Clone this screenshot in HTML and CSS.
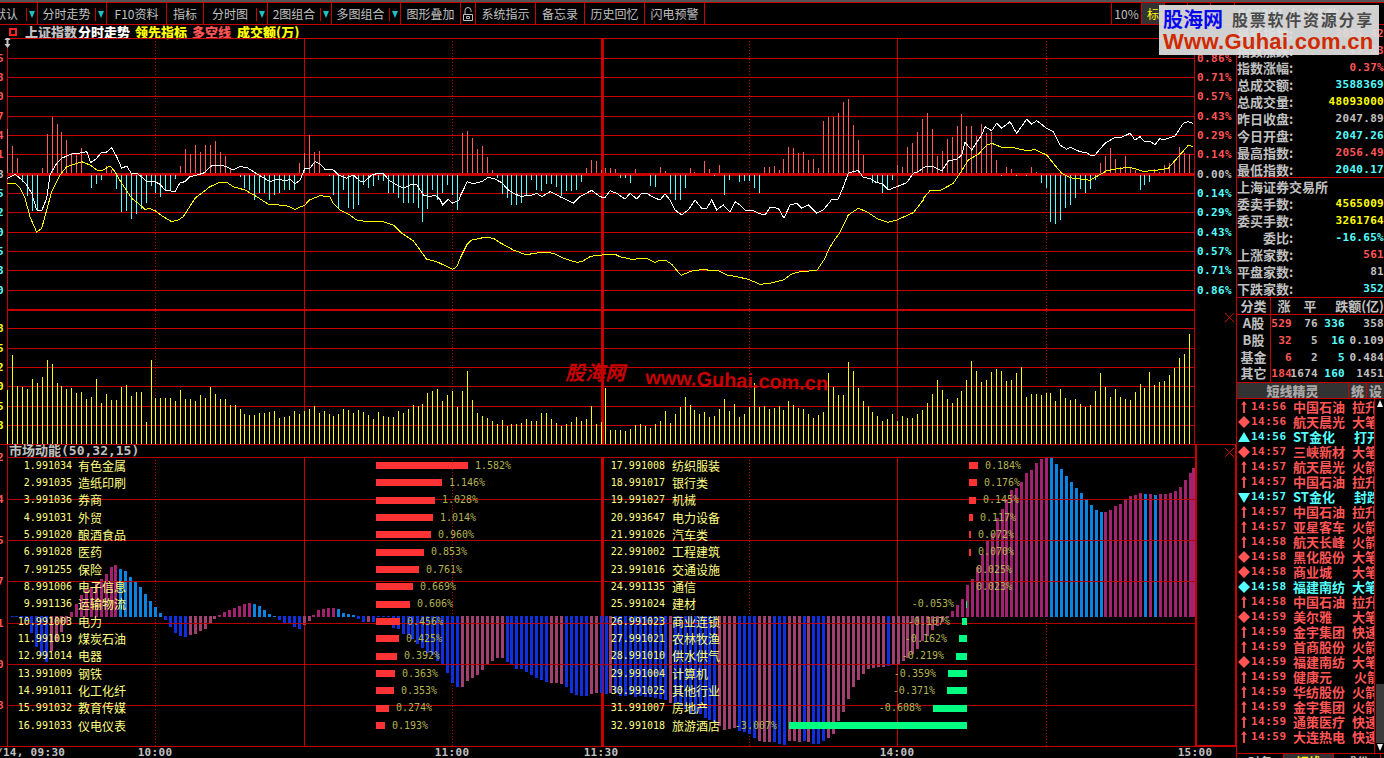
FILE: index.html
```html
<!DOCTYPE html>
<html lang="zh">
<head>
<meta charset="utf-8">
<title>上证指数 分时走势</title>
<link rel="stylesheet" href="styles.css">
</head>
<body>
<svg class="defs" aria-hidden="true">
  <symbol id="i-up" viewBox="0 0 12 13"><path d="M6 0L9 4H7V13H5V4H3z"/></symbol>
  <symbol id="i-dia" viewBox="0 0 12 12"><path d="M6 0L12 6L6 12L0 6z"/></symbol>
  <symbol id="i-tu" viewBox="0 0 12 12"><path d="M6 1L12 11H0z"/></symbol>
  <symbol id="i-td" viewBox="0 0 12 12"><path d="M0 2H12L6 12z"/></symbol>
</svg>

<header class="toolbar">
  <div class="tool w38"><span class="clip-l">默认</span><i class="drop"></i></div>
  <div class="tool w69"><span class="lbl">分时走势</span><i class="drop"></i></div>
  <div class="tool w60"><span class="lbl">F10资料</span></div>
  <div class="tool w37"><span class="lbl">指标</span></div>
  <div class="tool w64"><span class="lbl">分时图</span><i class="drop"></i></div>
  <div class="tool w64"><span class="lbl">2图组合</span><i class="drop"></i></div>
  <div class="tool w69"><span class="lbl">多图组合</span><i class="drop"></i></div>
  <div class="tool w60"><span class="lbl">图形叠加</span></div>
  <div class="tool w15">
    <svg class="lock" viewBox="0 0 12 15"><path d="M3 7V3.5a3 3 0 0 1 6 0V5M1.5 7.5h9v6h-9zM4.5 9.5h3v2h-3z"/></svg>
  </div>
  <div class="tool w60"><span class="lbl">系统指示</span></div>
  <div class="tool w49"><span class="lbl">备忘录</span></div>
  <div class="tool w60"><span class="lbl">历史回忆</span></div>
  <div class="tool w60"><span class="lbl">闪电预警</span></div>
  <div class="tool-gap"></div>
  <div class="tool w31 first"><span class="lbl">10%</span></div>
  <div class="tool w23 on"><span class="lbl">标</span></div>
  <div class="tool w23"></div>
  <div class="tool w23"></div>
  <div class="tool w24"></div>
  <div class="code"><span class="code-n">000001</span> 上证指数</div>
</header>

<div class="main">
  <section class="chart">
    <div class="title">
      <i class="mark"></i>
      <b class="t-gray">上证指数</b><b class="t-white">分时走势</b><b class="t-yellow g8">领先指标</b><b class="t-red g6">多空线</b><b class="t-yellow g7">成交额(万)</b>
    </div>
    <div class="plot">
      <svg class="canvas" viewBox="0 38 1236 720" width="1236" height="720">
        <path class="grid" d="M7 38.5H1236M7 58.5H1194M7 77.5H1194M7 96.5H1194M7 116.5H1194M7 135.5H1194M7 154.5H1194M7 193.5H1194M7 212.5H1194M7 232.5H1194M7 251.5H1194M7 270.5H1194M7 290.5H1194M7 328.5H1194M7 348.5H1194M7 367.5H1194M7 386.5H1194M7 406.5H1194M7 425.5H1194"/>
        <path class="grid" d="M7.5 38V746M304.5 38V444M304.5 457V746M897.5 38V444M897.5 457V746"/>
        <path class="grid dots" d="M155.5 38V444M155.5 457V746M452.5 38V444M452.5 457V746M749.5 38V444M749.5 457V746M1046.5 38V444M1046.5 457V746"/>
        <path class="grid w3" d="M602 38V444M602 457V746M7 174H1194"/>
        <path class="grid w2" d="M7 310H1194"/>
        <g id="bars-up"></g>
        <g id="bars-vol"></g>
        <path id="line-white" class="ln white"/>
        <path id="line-yellow" class="ln yellow"/>
        <g id="bars-hist"></g>
        <path class="grid lower" d="M7 457.5H1195M7 499.5H1195M7 540.5H1195M7 581.5H1195M7 623.5H1195M7 664.5H1195M7 705.5H1195"/>
        <path class="grid" d="M0 444.5H1236M0 746.5H1236M1194.5 38V444"/>
        <path class="grid w2" d="M1195.5 444V746M1235.5 444V746M1195 745.5H1236"/>
        <path class="cross" d="M1225 313l9 9m0-9l-9 9M1225 448l9 9m0-9l-9 9"/>

        <text class="wm-cn" x="565" y="380">股海网</text>
        <text class="wm-en" x="645" y="384" textLength="183" transform="rotate(2 645 384)">www.Guhai.com.cn</text>

        <path class="updown" d="M7.5 36l3 4h-2v4h2l-3 4-3-4h2v-4h-2z"/>

        <g class="ax">
          <text class="c-red" x="1197" y="62">0.86%</text>
          <text class="c-red" x="1197" y="81">0.71%</text>
          <text class="c-red" x="1197" y="100">0.57%</text>
          <text class="c-red" x="1197" y="120">0.43%</text>
          <text class="c-red" x="1197" y="139">0.29%</text>
          <text class="c-red" x="1197" y="158">0.14%</text>
          <text class="c-gray" x="1197" y="178">0.00%</text>
          <text class="c-cyan" x="1197" y="197">0.14%</text>
          <text class="c-cyan" x="1197" y="216">0.29%</text>
          <text class="c-cyan" x="1197" y="236">0.43%</text>
          <text class="c-cyan" x="1197" y="255">0.57%</text>
          <text class="c-cyan" x="1197" y="274">0.71%</text>
          <text class="c-cyan" x="1197" y="294">0.86%</text>
        </g>
        <g class="ax end">
          <text class="c-red" x="4" y="62">2065</text>
          <text class="c-red" x="4" y="81">2063</text>
          <text class="c-red" x="4" y="100">2060</text>
          <text class="c-red" x="4" y="120">2057</text>
          <text class="c-red" x="4" y="139">2054</text>
          <text class="c-red" x="4" y="158">2051</text>
          <text class="c-gray" x="4" y="178">2048</text>
          <text class="c-cyan" x="4" y="197">2045</text>
          <text class="c-cyan" x="4" y="216">2042</text>
          <text class="c-cyan" x="4" y="236">2040</text>
          <text class="c-cyan" x="4" y="255">2035</text>
          <text class="c-cyan" x="4" y="274">2033</text>
          <text class="c-cyan" x="4" y="294">2030</text>
          <text class="c-yel" x="4" y="332">3048</text>
          <text class="c-yel" x="4" y="352">2505</text>
          <text class="c-yel" x="4" y="371">2032</text>
          <text class="c-yel" x="4" y="390">1520</text>
          <text class="c-yel" x="4" y="410">1015</text>
          <text class="c-yel" x="4" y="429">503</text>
          <text class="c-red" x="4" y="461">12</text>
          <text class="c-red" x="4" y="503">24</text>
          <text class="c-red" x="4" y="544">35</text>
          <text class="c-red" x="4" y="585">27</text>
          <text class="c-red" x="4" y="627">31</text>
          <text class="c-red" x="4" y="668">50</text>
          <text class="c-red" x="4" y="709">68</text>
        </g>
        <text class="sub" x="9" y="455">市场动能(50,32,15)</text>
        <g class="time">
          <text x="-4" y="756">/14, 09:30</text>
          <text class="mid" x="155" y="756">10:00</text>
          <text class="mid" x="452" y="756">11:00</text>
          <text class="mid" x="601" y="756">11:30</text>
          <text class="mid" x="897" y="756">14:00</text>
          <text class="mid" x="1195" y="756">15:00</text>
        </g>
      </svg>

      <div class="movers">
        <div class="col1">
          <div class="mv"><span class="num">1.991034</span><span class="nm">有色金属</span><i class="bar up" style="width:92px"></i><span class="val">1.582%</span></div>
          <div class="mv"><span class="num">2.991035</span><span class="nm">造纸印刷</span><i class="bar up" style="width:66px"></i><span class="val">1.146%</span></div>
          <div class="mv"><span class="num">3.991036</span><span class="nm">券商</span><i class="bar up" style="width:59px"></i><span class="val">1.028%</span></div>
          <div class="mv"><span class="num">4.991031</span><span class="nm">外贸</span><i class="bar up" style="width:57px"></i><span class="val">1.014%</span></div>
          <div class="mv"><span class="num">5.991020</span><span class="nm">酿酒食品</span><i class="bar up" style="width:55px"></i><span class="val">0.960%</span></div>
          <div class="mv"><span class="num">6.991028</span><span class="nm">医药</span><i class="bar up" style="width:48px"></i><span class="val">0.853%</span></div>
          <div class="mv"><span class="num">7.991255</span><span class="nm">保险</span><i class="bar up" style="width:43px"></i><span class="val">0.761%</span></div>
          <div class="mv"><span class="num">8.991006</span><span class="nm">电子信息</span><i class="bar up" style="width:37px"></i><span class="val">0.669%</span></div>
          <div class="mv"><span class="num">9.991136</span><span class="nm">运输物流</span><i class="bar up" style="width:34px"></i><span class="val">0.606%</span></div>
          <div class="mv"><span class="num">10.991003</span><span class="nm">电力</span><i class="bar up" style="width:24px"></i><span class="val">0.456%</span></div>
          <div class="mv"><span class="num">11.991019</span><span class="nm">煤炭石油</span><i class="bar up" style="width:23px"></i><span class="val">0.425%</span></div>
          <div class="mv"><span class="num">12.991014</span><span class="nm">电器</span><i class="bar up" style="width:21px"></i><span class="val">0.392%</span></div>
          <div class="mv"><span class="num">13.991009</span><span class="nm">钢铁</span><i class="bar up" style="width:19px"></i><span class="val">0.363%</span></div>
          <div class="mv"><span class="num">14.991011</span><span class="nm">化工化纤</span><i class="bar up" style="width:18px"></i><span class="val">0.353%</span></div>
          <div class="mv"><span class="num">15.991032</span><span class="nm">教育传媒</span><i class="bar up" style="width:13px"></i><span class="val">0.274%</span></div>
          <div class="mv"><span class="num">16.991033</span><span class="nm">仪电仪表</span><i class="bar up" style="width:9px"></i><span class="val">0.193%</span></div>
        </div>
        <div class="col2">
          <div class="mv"><span class="num">17.991008</span><div class="cell"><span>纺织服装</span></div><i class="bar up" style="width:9px"></i><span class="val">0.184%</span></div>
          <div class="mv"><span class="num">18.991017</span><div class="cell"><span>银行类</span></div><i class="bar up" style="width:8px"></i><span class="val">0.176%</span></div>
          <div class="mv"><span class="num">19.991027</span><div class="cell"><span>机械</span></div><i class="bar up" style="width:7px"></i><span class="val">0.145%</span></div>
          <div class="mv"><span class="num">20.993647</span><div class="cell"><span>电力设备</span></div><i class="bar up" style="width:4px"></i><span class="val">0.117%</span></div>
          <div class="mv"><span class="num">21.991026</span><div class="cell"><span>汽车类</span></div><i class="bar up" style="width:2px"></i><span class="val">0.072%</span></div>
          <div class="mv"><span class="num">22.991002</span><div class="cell"><span>工程建筑</span></div><i class="bar up" style="width:2px"></i><span class="val">0.070%</span></div>
          <div class="mv"><span class="num">23.991016</span><div class="cell"><span>交通设施</span></div><i class="bar up" style="width:0"></i><span class="val">0.025%</span></div>
          <div class="mv"><span class="num">24.991135</span><div class="cell"><span>通信</span></div><i class="bar up" style="width:0"></i><span class="val">0.023%</span></div>
          <div class="mv"><span class="num">25.991024</span><div class="cell"><span>建材</span><span class="neg"><span class="val">-0.053%</span><i class="bar dn" style="width:1px"></i></span></div></div>
          <div class="mv"><span class="num">26.991023</span><div class="cell"><span>商业连锁</span><span class="neg"><span class="val">-0.107%</span><i class="bar dn" style="width:5px"></i></span></div></div>
          <div class="mv"><span class="num">27.991021</span><div class="cell"><span>农林牧渔</span><span class="neg"><span class="val">-0.162%</span><i class="bar dn" style="width:8px"></i></span></div></div>
          <div class="mv"><span class="num">28.991010</span><div class="cell"><span>供水供气</span><span class="neg"><span class="val">-0.219%</span><i class="bar dn" style="width:11px"></i></span></div></div>
          <div class="mv"><span class="num">29.991004</span><div class="cell"><span>计算机</span><span class="neg"><span class="val">-0.359%</span><i class="bar dn" style="width:19px"></i></span></div></div>
          <div class="mv"><span class="num">30.991025</span><div class="cell"><span>其他行业</span><span class="neg"><span class="val">-0.371%</span><i class="bar dn" style="width:20px"></i></span></div></div>
          <div class="mv"><span class="num">31.991007</span><div class="cell"><span>房地产</span><span class="neg"><span class="val">-0.608%</span><i class="bar dn" style="width:34px"></i></span></div></div>
          <div class="mv"><span class="num">32.991018</span><div class="cell"><span>旅游酒店</span><span class="neg"><span class="val">-3.007%</span><i class="bar dn" style="width:178px"></i></span></div></div>
        </div>
      </div>
    </div>
  </section>

  <aside class="side">
    <div class="block b1">
      <div class="kv"><span>最新指数:</span><b class="c-red">2055.42</b></div>
      <div class="kv"><span>指数涨跌:</span><b class="c-red">+7.53</b></div>
      <div class="kv"><span>指数涨幅:</span><b class="c-red">0.37%</b></div>
      <div class="kv"><span>总成交额:</span><b class="c-cyan">3588369</b></div>
      <div class="kv"><span>总成交量:</span><b class="c-yel">48093000</b></div>
      <div class="kv"><span>昨日收盘:</span><b class="c-gray">2047.89</b></div>
      <div class="kv"><span>今日开盘:</span><b class="c-cyan">2047.26</b></div>
      <div class="kv"><span>最高指数:</span><b class="c-red">2056.49</b></div>
      <div class="kv"><span>最低指数:</span><b class="c-cyan">2040.17</b></div>
    </div>
    <div class="block b2">
      <div class="kv"><span>上海证券交易所</span></div>
      <div class="kv"><span>委卖手数:</span><b class="c-yel">4565009</b></div>
      <div class="kv"><span>委买手数:</span><b class="c-yel">3261764</b></div>
      <div class="kv"><span class="pad-l">委比:</span><b class="c-cyan">-16.65%</b></div>
      <div class="kv"><span>上涨家数:</span><b class="c-red">561</b></div>
      <div class="kv"><span>平盘家数:</span><b class="c-gray">81</b></div>
      <div class="kv"><span>下跌家数:</span><b class="c-cyan">352</b></div>
    </div>
    <div class="stats">
      <div class="st st-h"><span class="st-a">分类</span><span class="st-c">涨</span><span class="st-c">平</span><span class="st-z">跌额(亿)</span></div>
      <div class="st"><span class="st-a">A股</span><b class="c-red">529</b><b class="c-gray">76</b><b class="c-cyan">336</b><b class="c-gray">358</b></div>
      <div class="st"><span class="st-a">B股</span><b class="c-red">32</b><b class="c-gray">5</b><b class="c-cyan">16</b><b class="c-gray">0.109</b></div>
      <div class="st"><span class="st-a">基金</span><b class="c-red">6</b><b class="c-gray">2</b><b class="c-cyan">5</b><b class="c-gray">0.484</b></div>
      <div class="st"><span class="st-a">其它</span><b class="c-red">184</b><b class="c-gray">1674</b><b class="c-cyan">160</b><b class="c-gray">1451</b></div>
    </div>
    <div class="elf">
      <b class="elf-t">短线精灵</b><b class="elf-b">统</b><b class="elf-b">设</b>
    </div>
    <div class="feed">
      <ul class="events">
        <li class="ev"><svg class="ic"><use href="#i-up"/></svg><b>14:56</b><span>中国石油</span><span>拉升</span></li>
        <li class="ev"><svg class="ic"><use href="#i-dia"/></svg><b>14:56</b><span>航天晨光</span><span>大笔</span></li>
        <li class="ev cy"><svg class="ic"><use href="#i-tu"/></svg><b>14:56</b><span>ST金化</span><span class="in">打开</span></li>
        <li class="ev"><svg class="ic"><use href="#i-dia"/></svg><b>14:57</b><span>三峡新材</span><span>大笔</span></li>
        <li class="ev"><svg class="ic"><use href="#i-up"/></svg><b>14:57</b><span>航天晨光</span><span>火箭</span></li>
        <li class="ev"><svg class="ic"><use href="#i-up"/></svg><b>14:57</b><span>中国石油</span><span>拉升</span></li>
        <li class="ev cy"><svg class="ic"><use href="#i-td"/></svg><b>14:57</b><span>ST金化</span><span class="in">封跌</span></li>
        <li class="ev"><svg class="ic"><use href="#i-up"/></svg><b>14:57</b><span>中国石油</span><span>拉升</span></li>
        <li class="ev"><svg class="ic"><use href="#i-up"/></svg><b>14:57</b><span>亚星客车</span><span>火箭</span></li>
        <li class="ev"><svg class="ic"><use href="#i-up"/></svg><b>14:58</b><span>航天长峰</span><span>火箭</span></li>
        <li class="ev"><svg class="ic"><use href="#i-dia"/></svg><b>14:58</b><span>黑化股份</span><span>大笔</span></li>
        <li class="ev"><svg class="ic"><use href="#i-dia"/></svg><b>14:58</b><span>商业城</span><span>大笔</span></li>
        <li class="ev cy"><svg class="ic"><use href="#i-dia"/></svg><b>14:58</b><span>福建南纺</span><span>大笔</span></li>
        <li class="ev"><svg class="ic"><use href="#i-up"/></svg><b>14:58</b><span>中国石油</span><span>拉升</span></li>
        <li class="ev"><svg class="ic"><use href="#i-dia"/></svg><b>14:59</b><span>美尔雅</span><span>大笔</span></li>
        <li class="ev"><svg class="ic"><use href="#i-up"/></svg><b>14:59</b><span>金宇集团</span><span>快速</span></li>
        <li class="ev"><svg class="ic"><use href="#i-up"/></svg><b>14:59</b><span>首商股份</span><span>火箭</span></li>
        <li class="ev"><svg class="ic"><use href="#i-dia"/></svg><b>14:59</b><span>福建南纺</span><span>大笔</span></li>
        <li class="ev"><svg class="ic"><use href="#i-up"/></svg><b>14:59</b><span>健康元</span><span class="in">火箭</span></li>
        <li class="ev"><svg class="ic"><use href="#i-up"/></svg><b>14:59</b><span>华纺股份</span><span>火箭</span></li>
        <li class="ev"><svg class="ic"><use href="#i-up"/></svg><b>14:59</b><span>金宇集团</span><span>火箭</span></li>
        <li class="ev"><svg class="ic"><use href="#i-up"/></svg><b>14:59</b><span>通策医疗</span><span>快速</span></li>
        <li class="ev"><svg class="ic"><use href="#i-up"/></svg><b>14:59</b><span>大连热电</span><span>快速</span></li>
      </ul>
      <div class="scroll">
        <i class="sb-btn sb-up"></i>
        <i class="sb-thumb"></i>
        <i class="sb-btn sb-dn"></i>
      </div>
    </div>
    <div class="tabs"><span class="tab">财务</span><span class="tab active">短线</span><span class="tab">成份</span></div>
  </aside>
</div>

<div class="brand">
  <div class="brand-a"><b class="brand-cn">股海网</b><span class="brand-sl">股票软件资源分享</span></div>
  <b class="brand-url">Www.Guhai.com.cn</b>
</div>

<script src="chart.js"></script>
</body>
</html>
```
FILE: styles.css
```css
* { box-sizing: border-box; }
html, body { margin: 0; padding: 0; background: #000; }
body {
  width: 1384px; height: 758px; overflow: hidden; position: relative;
  color: #c0c0c0;
  font: 12px/1 "DejaVu Sans Mono", "Noto Sans CJK SC", monospace;
}
.defs { position: absolute; width: 0; height: 0; }
ul { list-style: none; margin: 0; padding: 0; }

/* toolbar */
.toolbar {
  display: flex; height: 25px;
  border-top: 2px solid #555;
  position: relative;
  background: #000;
}
.toolbar::before { content: ""; position: absolute; left: 0; right: 0; top: 0; border-top: 1px solid #c80000; }
.toolbar::after { content: ""; position: absolute; left: 0; right: 0; bottom: 0; border-top: 1px solid #c80000; }
.tool {
  flex: none; height: 22px; margin-top: 1px;
  display: flex; align-items: center;
  border-right: 1px solid #c80000;
  font-size: 12px; color: #c0c0c0;
  overflow: hidden;
}
.lbl { flex: 1; text-align: center; white-space: nowrap; font-family: "Noto Sans CJK SC", sans-serif; font-size: 12px; }
.clip-l { flex: 1; margin-left: -6px; white-space: nowrap; font-family: "Noto Sans CJK SC", sans-serif; }
.w15 { width: 15px; justify-content: center; }
.w23 { width: 23px; } .w24 { width: 24px; } .w31 { width: 31px; }
.w37 { width: 37px; } .w38 { width: 38px; } .w49 { width: 49px; }
.w60 { width: 60px; } .w64 { width: 64px; } .w69 { width: 69px; }
.first { border-left: 1px solid #c80000; }
.tool-gap { flex: 1; }
.on { background: #333; }
.on .lbl { color: #ffff00; }
.drop {
  flex: none; width: 11px; height: 13px; position: relative;
  border-left: 1px solid #c80000;
  margin-right: 0;
}
.drop::after {
  content: ""; position: absolute; left: 2px; top: 3px;
  border: 3.5px solid transparent; border-top: 7px solid #1fc0c0; border-bottom: 0;
}
.lock { width: 12px; height: 15px; fill: none; stroke: #c0c0c0; stroke-width: 1; }
.code { width: 149px; padding-left: 3px; margin-top: 5px; font-weight: bold; color: #c0c0c0; white-space: nowrap; font-family: "Noto Sans CJK SC", sans-serif; font-size: 13px; }
.code-n { color: #55ffff; }

/* main */
.main { display: flex; height: 733px; }
.chart { width: 1236px; flex: none; display: flex; flex-direction: column; }
.title {
  height: 13px; display: flex; align-items: center;
  font: bold 13px/13px "Noto Sans CJK SC", sans-serif;
  padding-left: 9px;
  white-space: nowrap;
}
.mark { width: 8px; height: 8px; border: 2px solid #ff2020; margin-right: 8px; flex: none; }
.t-gray { color: #c0c0c0; } .t-white { color: #fff; margin-left: 1px; }
.t-yellow { color: #ffff00; } .t-red { color: #ff5555; }
.g8 { margin-left: 5px; } .g6 { margin-left: 5px; } .g7 { margin-left: 6px; }

.plot { position: relative; flex: 1; overflow: hidden; }
.canvas { display: block; }
.grid { fill: none; stroke: #c80000; stroke-width: 1; shape-rendering: crispEdges; }
.dots { stroke-dasharray: 1 2; }
.w3 { stroke-width: 3; }
.w2 { stroke-width: 2; }
.lower { stroke: #b40000; }
.cross { fill: none; stroke: #c80000; stroke-width: 1; }
.ln { fill: none; stroke-width: 1; shape-rendering: crispEdges; }
.white { stroke: #fff; }
.yellow { stroke: #ffff00; }
.b-red { stroke: #ff5c5c; stroke-width: 1; shape-rendering: crispEdges; fill: none; }
.b-cy { stroke: #55ffff; stroke-width: 1; shape-rendering: crispEdges; fill: none; }
.b-vol { stroke: #ffff00; stroke-width: 1; shape-rendering: crispEdges; fill: none; }
.h-mag { fill: #a32270; shape-rendering: crispEdges; }
.h-sky { fill: #0a84e0; shape-rendering: crispEdges; }
.h-pink { fill: #a04070; shape-rendering: crispEdges; }
.h-blue { fill: #1030e0; shape-rendering: crispEdges; }
.updown { fill: #c8c8c8; }

.ax text { font: bold 11px "DejaVu Sans Mono", monospace; letter-spacing: .4px; }
.ax.end text { text-anchor: end; }
text.c-red { fill: #ff5555; } text.c-cyan { fill: #55ffff; }
text.c-gray { fill: #c0c0c0; } text.c-yel { fill: #ffff00; }
.sub { font: bold 13px "DejaVu Sans Mono", "Noto Sans CJK SC", monospace; fill: #c0c0c0; }
.time text { font: bold 11px "DejaVu Sans Mono", monospace; letter-spacing: .3px; fill: #c0c0c0; }
.time .mid { text-anchor: middle; }
.wm-cn { font: bold 20px "Noto Sans CJK SC", sans-serif; fill: #c80000; font-style: italic; }
.wm-en { font: bold 20px "Liberation Sans", sans-serif; fill: #c80000; }

/* movers */
.movers {
  position: absolute; left: 0; top: 419px; width: 1195px; height: 278px;
  display: flex;
  font-size: 10px; color: #ffff80;
}
.col1 { width: 606px; flex: none; }
.col2 { flex: 1; }
.mv { display: flex; align-items: center; height: 17.33px; white-space: nowrap; }
.num { flex: none; text-align: right; }
.col1 .num { width: 72px; }
.col2 .num { width: 59px; }
.nm { flex: none; width: 298px; margin-left: 6px; font: 12px/1 "Noto Sans CJK SC", sans-serif; }
.cell {
  flex: none; width: 295px; margin-left: 7px; margin-right: 2px;
  display: flex; align-items: center; justify-content: space-between;
  font: 12px/1 "Noto Sans CJK SC", sans-serif;
}
.neg { display: flex; align-items: center; gap: 12px; font: 10px/1 "DejaVu Sans Mono", monospace; }
.bar { flex: none; height: 7px; display: block; }
.up { background: #ff3333; margin-right: 7px; }
.dn { background: #00ff80; }
.val { color: #b4b450; }

/* sidebar */
.side {
  width: 148px; flex: none; overflow: hidden;
  border-left: 1px solid #c80000;
  display: flex; flex-direction: column;
  margin-top: 0;
}
.block { border-bottom: 1px solid #c80000; flex: none; }
.b1 { height: 153px; }
.b2 { height: 120px; }
.kv {
  height: 17px; display: flex; justify-content: space-between; align-items: center;
  white-space: nowrap; overflow: hidden;
  font: bold 13px/17px "Noto Sans CJK SC", sans-serif; color: #c0c0c0;
}
.kv span { padding-left: 0; }
.kv b, .st b { font: bold 11px/17px "DejaVu Sans Mono", monospace; letter-spacing: .3px; }
.pad-l { margin-left: 26px; }
b.c-red { color: #ff5555; } b.c-cyan { color: #55ffff; } b.c-gray { color: #c0c0c0; } b.c-yel { color: #ffff00; }

.stats { display: flex; flex-direction: column; font: bold 13px/16px "Noto Sans CJK SC", sans-serif; flex: none; }
.st {
  display: grid; grid-template-columns: 34px 21px 26px 27px 39px;
  height: 16.75px; align-items: center; justify-items: end;
  white-space: nowrap;
}
.st-h { height: 17px; border-bottom: 1px solid #c80000; flex: none; grid-template-columns: 34px 26px 26px 1fr; justify-items: center; }
.st-a { justify-self: stretch; text-align: center; border-right: 1px solid #c80000; height: 100%; line-height: 16px; }
.st-c { justify-self: center; }
.st-z { justify-self: end; font-size: 13px; }

.elf {
  height: 17px; display: flex; background: #333;
  border-top: 1px solid #c80000; border-bottom: 1px solid #c80000;
  font: bold 13px/15px "Noto Sans CJK SC", sans-serif; color: #a8a8a8;
  flex: none; text-align: center;
}
.elf-t { flex: 1; }
.elf-b { width: 18px; border-left: 1px solid #c80000; }

.feed { display: flex; height: 354px; flex: none; }
.events { width: 137px; flex: none; overflow: hidden; color: #ff5555; }
.ev {
  display: grid; grid-template-columns: 14px 42px 59px 22px;
  height: 15px; align-items: center; white-space: nowrap;
  font: bold 13px/15px "Noto Sans CJK SC", sans-serif;
  overflow: hidden;
}
.ev b { font: bold 11px/15px "DejaVu Sans Mono", monospace; letter-spacing: .5px; }
.ev span:last-child { overflow: hidden; }
.ev .in { padding-left: 2px; }
.cy { color: #55ffff; }
.ic { width: 12px; height: 12px; margin-left: 1px; fill: currentColor; }

.scroll { width: 10px; flex: none; position: relative; border-left: 1px solid #c80000; }
.sb-btn { display: block; position: absolute; left: 1px; width: 9px; height: 9px; }
.sb-btn::after {
  content: ""; position: absolute; left: 1px; border: 3.5px solid transparent;
}
.sb-up { top: 1px; }
.sb-up::after { top: 0; border-bottom: 7px solid #eee; border-top: 0; }
.sb-dn { top: 345px; }
.sb-dn::after { top: 0; border-top: 7px solid #eee; border-bottom: 0; }
.sb-thumb { display: block; position: absolute; left: 1px; right: 0; top: 285px; height: 59px; background: #3a3a3a; }

.tabs {
  height: 6px; display: flex; overflow: hidden; flex: none;
  border-top: 1px solid #c80000;
  font: bold 12px/15px "Noto Sans CJK SC", sans-serif;
  padding-left: 0;
}
.tab { width: 47px; text-align: center; border-right: 1px solid #c80000; }
.active { background: #333; color: #ffff00; width: 50px; }

/* watermark banner */
.brand {
  position: absolute; left: 1159px; top: 5px; width: 220px; height: 50px;
  background: rgba(224, 224, 224, .93);
  padding: 3px 3px 0 4px;
}
.brand-a { display: flex; align-items: center; height: 22px; }
.brand-cn { font: bold 20px/22px "Noto Sans CJK SC", sans-serif; color: #0808ee; }
.brand-sl { font: bold 16px/18px "Noto Sans CJK SC", sans-serif; color: #4a4a4a; margin-left: 9px; letter-spacing: 1.75px; white-space: nowrap; }
.brand-url { display: block; font: bold 22px/24px "Liberation Sans", sans-serif; color: #d02a00; white-space: nowrap; letter-spacing: .3px; }
```
FILE: chart.js
```js
// Draws the intraday chart series into the SVG canvas.
var NS = 'http://www.w3.org/2000/svg';
function add(parent, cls, d) {
  var p = document.createElementNS(NS, 'path');
  p.setAttribute('class', cls);
  p.setAttribute('d', d);
  document.getElementById(parent).appendChild(p);
}
function tickX(i) { return Math.floor(7.6 + 4.945 * i) + 0.5; }

// Long/short histogram around the zero line
var diff = [
  44,27,15,-7,-21,-36,-36,5,39,56,
  49,41,33,20,18,25,0,-13,-9,-5,
  7,3,-14,-37,-36,-44,-39,-34,-28,-11,
  -18,-22,-16,-16,-4,7,24,19,28,21,
  28,28,32,21,17,5,0,-2,-13,-15,
  -25,-18,-18,-25,-20,-18,-15,-15,-15,10,
  20,38,21,22,0,-1,-20,-34,-15,-33,
  -34,-30,-10,-13,-11,-5,-6,-18,-18,-23,
  -28,-28,-28,-33,-47,-34,-15,-25,-18,-10,-20,-35,
  40,42,35,24,27,16,3,-3,-19,-23,
  -30,-30,-28,-20,-5,-15,-16,-9,-9,-12,
  -21,-16,-16,-15,-7,5,13,12,3,5,
  5,4,-3,-3,-8,4,0,0,-11,-12,
  6,2,-19,-25,-25,-13,5,1,0,12,
  4,-1,8,-20,-5,0,-7,-6,-6,-13,
  -18,6,6,7,3,14,26,25,20,21,
  13,14,5,52,56,56,60,71,74,48,
  33,18,0,-8,-8,-18,-15,-5,8,6,26,30,41,
  54,60,44,17,22,34,36,47,59,47,
  47,37,49,40,41,13,-1,6,4,-1,
  0,-1,6,1,-8,-13,-47,-49,-45,-33,
  -30,-23,-14,-18,-14,-5,10,17,25,14,
  6,17,6,3,-15,-10,-7,4,1,8,
  10,12,26,20,19,0
];
var up = '', dn = '';
diff.forEach(function (v, i) {
  var x = tickX(i);
  if (v > 0) up += 'M' + x + ' 173V' + (173 - v);
  if (v < 0) dn += 'M' + x + ' 175V' + (175 - v);
});
add('bars-up', 'b-red', up);
add('bars-up', 'b-cy', dn);

// Turnover
var vol = [
  54,89,58,57,55,65,61,67,84,80,61,58,55,56,51,52,45,47,65,41,
  50,44,44,57,59,48,52,52,22,84,46,46,46,46,43,54,45,45,43,49,
  46,57,50,45,45,39,39,35,30,29,29,31,31,32,33,26,27,28,33,30,
  33,35,38,31,33,30,28,30,35,34,31,34,32,29,25,32,28,27,27,33,
  31,35,39,38,40,51,53,55,43,49,53,37,53,73,44,31,28,26,23,20,
  24,18,20,20,21,25,23,23,31,31,25,21,18,20,22,27,23,25,38,20,
  22,56,14,14,14,13,15,19,20,18,16,20,23,33,21,30,37,47,39,34,
  30,32,27,28,35,45,33,40,27,30,37,61,37,38,35,36,38,34,43,39,
  36,35,30,26,29,32,71,57,49,49,82,73,56,43,38,32,28,23,25,30,
  23,28,26,26,30,34,41,50,64,54,45,41,46,53,64,83,73,62,64,72,75,
  73,63,64,71,77,47,50,50,49,51,51,43,55,46,44,45,40,37,39,53,
  71,57,47,55,47,45,44,52,60,56,72,59,62,63,69,76,86,90,110,134
];
var vd = '';
vol.forEach(function (h, i) { var x = tickX(i); vd += 'M' + x + ' 444V' + (444 - h); });
add('bars-vol', 'b-vol', vd);

// Lines are read as pixel pairs with an origin and a 1/3 scale
function pts(ox, oy, a) {
  var out = [];
  for (var i = 0; i < a.length; i += 2) out.push((ox + a[i] / 3).toFixed(1) + ' ' + (oy + a[i + 1] / 3).toFixed(1));
  return out;
}
function lineD(parts) {
  var all = [];
  parts.forEach(function (p) { all = all.concat(pts(p[0], p[1], p[2])); });
  return 'M' + all.join('L');
}
document.getElementById('line-white').setAttribute('d', lineD([
  [0,160,[22,55,45,43,60,55,80,75,95,100,110,150,125,152,140,115,150,45]],
  [0,0,[155,515,170,490,185,475,200,468,215,462,235,460,260,455,272,488,290,475,305,456,320,456,335,443,350,470,365,505,380,498,395,522,410,520,425,530,440,545,465,545,480,553,495,570,525,575,540,548,555,545,570,530,590,525,610,520,635,497,670,497,690,505,700,510,720,500,740,502,765,518,785,530,810,545,825,540,840,538,855,543,870,538,885,552,900,540,915,505,930,505,945,485,960,492,975,508,1000,510,1015,525,1040,535,1060,525,1080,543,1095,543,1115,525,1135,520,1150,521,1170,543,1190,555,1210,565,1235,552,1250,553,1270,585,1290,590,1305,585,1320,598,1328,615,1345,598,1358,610,1378,600]],
  [460,0,[0,590,22,545,40,551,65,545,85,532,105,537,125,548,145,570,165,582,185,590,200,585,215,585,230,580,245,590,270,575,285,582,300,590,320,600,340,610,360,590,395,571,420,590,435,593,450,572,470,580,495,597,510,580,530,597,545,580,560,580,580,592,600,600,615,582,630,600]],
  [500,200,[525,30,545,45,565,30,585,0,605,25,620,25,635,0,650,30,670,15,690,35,705,5,720,15,735,30,755,30,775,40,795,45,810,22,835,25,852,55,870,15,890,10,905,25,925,15,950,40,970,30,990,5]],
  [460,0,[1115,598,1135,597,1150,560,1165,520,1180,515,1195,511,1210,533,1230,535,1250,548,1265,550,1285,570,1310,560,1340,548,1360,520,1380,512]],
  [920,0,[0,510,20,498,40,500,65,513,85,483,110,478,125,465,135,427,155,450,185,405,195,380,215,392,230,370,245,385,270,365,290,400,320,358,335,372,350,362,380,385,400,395,420,435,440,448,450,442,480,455,500,458,510,465,525,465,555,430,585,412,605,412,630,400,645,420,660,410,675,425,690,423,705,435,720,415,730,420,765,408,790,370,805,365,820,370]]
]));
document.getElementById('line-yellow').setAttribute('d', lineD([
  [0,160,[22,70,45,70,60,85,75,115,90,170,110,217,125,205,140,150,155,95,180,45,200,20,245,5,270,15,290,30,305,32,330,18,345,35,365,70,395,115,415,130,435,148,450,146,465,152,490,170,515,185,535,180,550,170,585,115]],
  [0,0,[630,560,660,547,680,547,700,560,735,570,770,590]],
  [0,200,[785,0,805,12,860,17,885,28,915,15,928,0]],
  [0,0,[960,587,990,590]],
  [0,200,[1000,10,1020,30,1045,42,1070,60,1100,65,1150,65,1180,75,1205,100,1240,122,1280,178,1310,185,1358,208,1370,200,1385,165,1400,135,1415,120,1455,112,1480,115]],
  [500,200,[0,128,40,150,80,165,100,160,140,157,160,160,190,175,230,187,245,185,270,170,290,166,345,163,360,170,395,178,440,175,465,187,480,181,500,183,515,193,543,226,575,213,615,208,630,212,655,212,680,225,710,230,745,238,780,253,810,250,850,240,875,222,905,214,950,212,975,175,985,150,1000,125,1018,100,1045,45,1075,25,1100,35,1135,58,1165,67,1190,60,1240,38,1270,0]],
  [920,0,[10,595,30,572,60,572,100,550,120,520,145,480,175,463,200,435,215,430,245,442,280,443,320,452,345,449,380,465,400,490,425,520,450,533,510,541,560,512,600,505,630,502,670,514,700,512,745,505,775,470,805,436,820,440]]
]));

// Market momentum histogram
var hist = [
  -1,-1,-2,-5,-17,-31,-40,-46,-35,-26,
  -16,-7,5,13,22,28,30,35,38,43,
  50,52,48,46,40,35,30,23,16,10,
  4,-4,-11,-17,-20,-21,-19,-18,-15,-13,
  -8,-3,2,5,7,9,11,13,14,13,
  11,7,3,1,-4,-7,-8,-11,-13,-9,
  -5,2,7,8,9,9,8,4,3,2,
  -3,-6,-6,-6,-1,-1,-1,-12,-13,-18,
  -19,-23,-28,-32,-37,-39,-45,-49,-57,-67,
  -71,-71,-65,-62,-59,-54,-49,-45,-42,-42,
  -46,-49,-53,-53,-56,-59,-62,-64,-66,-67,
  -67,-68,-71,-77,-79,-80,-80,-78,-77,-77,
  -78,-77,-77,-80,-80,-79,-81,-80,-81,-81,
  -82,-83,-84,-87,-87,-90,-93,-97,-98,-98,
  -102,-104,-107,-110,-114,-113,-112,-115,-116,-118,
  -122,-125,-126,-126,-126,-128,-129,-125,-125,-126,
  -125,-126,-128,-128,-125,-122,-118,-105,-96,-83,
  -71,-64,-58,-53,-52,-51,-51,-50,-49,-48,-45,
  -42,-38,-33,-25,-20,-14,-10,-6,-2,6,
  12,18,32,38,50,63,77,83,99,108,117,127,129,135,144,147,154,158,159,159,
  153,148,141,135,129,124,118,112,107,105,105,107,111,113,117,121,122,124,123,123,
  122,123,123,124,126,130,137,144,149
];
var blue = [[0,7],[22,35],[49,58],[66,71],[73,90],[100,108],[112,116],[119,120],[122,128],[129,132],[134,142],[147,150],[154,156],[160,160],[162,164],[177,177],[210,220],[229,229],[231,231]];
function isBlue(i) { return blue.some(function (r) { return i >= r[0] && i <= r[1]; }); }
var buckets = { 'h-mag': '', 'h-sky': '', 'h-pink': '', 'h-blue': '' };
hist.forEach(function (v, i) {
  var x = Math.floor(11 + 4.95 * i), b = isBlue(i);
  if (x + 3 > 1195) x = 1192;
  if (v > 0) buckets[b ? 'h-sky' : 'h-mag'] += 'M' + x + ' ' + (617 - v) + 'h3V617h-3z';
  else buckets[b ? 'h-blue' : 'h-pink'] += 'M' + x + ' 616h3V' + (616 - v) + 'h-3z';
});
Object.keys(buckets).forEach(function (c) { add('bars-hist', c, buckets[c]); });
```
